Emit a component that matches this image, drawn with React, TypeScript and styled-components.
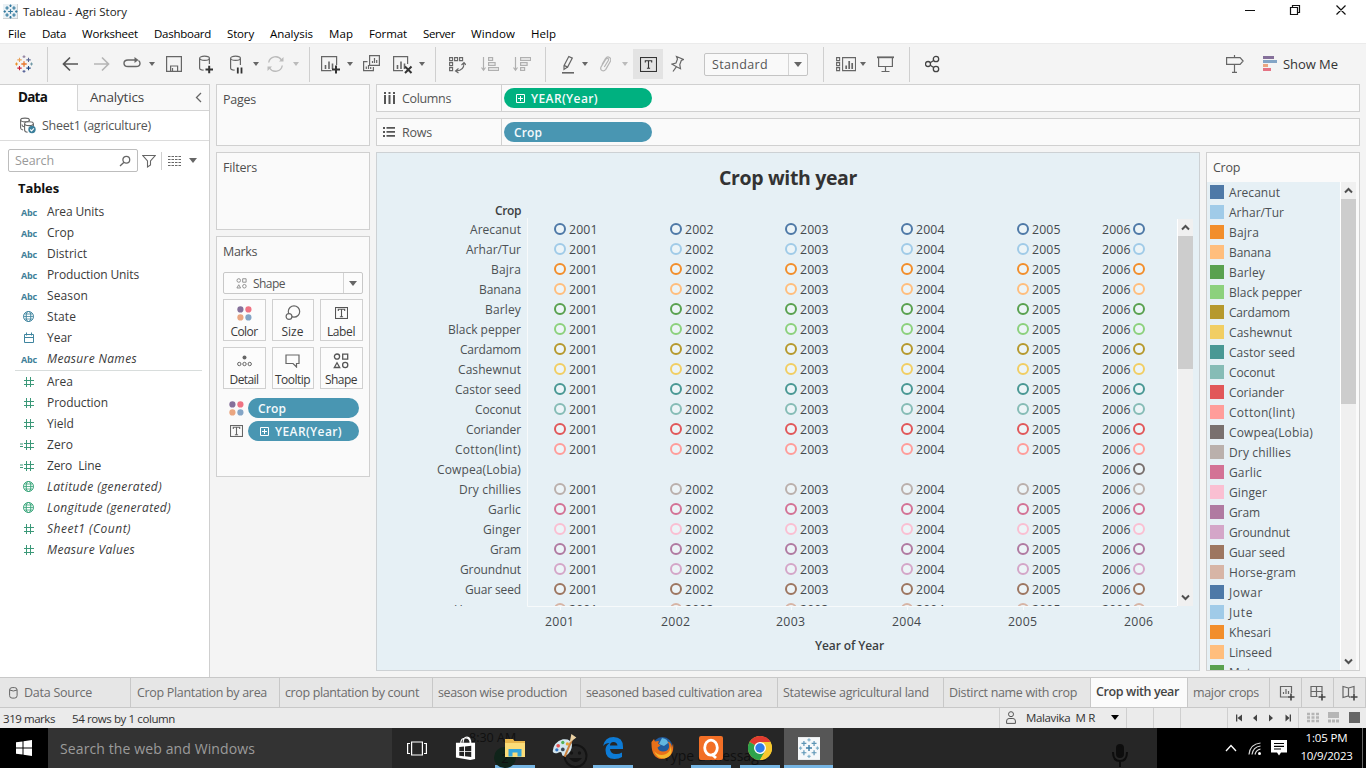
import React, { useLayoutEffect, useRef, ReactNode } from "react";
import styled, { createGlobalStyle } from "styled-components";

const Global = createGlobalStyle`
  *, *::before, *::after { box-sizing: border-box; }
  html, body { margin: 0; padding: 0; overflow: hidden; }
  body { font-family: "Open Sans", "Noto Sans", sans-serif; font-size: 12px; color: #4f4f4f; }
  svg { display: block; flex: none; }
`;

/* Text tracked so that it fills the given width. */
const FitSpan = styled.span`
  display: inline-block;
  white-space: pre;
  flex: none;
`;
function Fit({ w, children }: { w: number; children: string }) {
  const ref = useRef<HTMLSpanElement>(null);
  useLayoutEffect(() => {
    const el = ref.current;
    if (!el) return;
    el.style.letterSpacing = "0px";
    const natural = el.getBoundingClientRect().width;
    el.style.letterSpacing = `${((w - natural) / children.length).toFixed(3)}px`;
  }, [w, children]);
  return <FitSpan ref={ref}>{children}</FitSpan>;
}

const palette = [
  "#4e79a7", "#a0cbe8", "#f28e2b", "#ffbe7d", "#59a14f", "#8cd17d", "#b6992d", "#f1ce63", "#499894", "#86bcb6",
  "#e15759", "#ff9d9a", "#79706e", "#bab0ac", "#d37295", "#fabfd2", "#b07aa1", "#d4a6c8", "#9d7660", "#d7b5a6",
];
const crops: [string, number][] = [
  ["Arecanut", 51], ["Arhar/Tur", 55], ["Bajra", 30], ["Banana", 42], ["Barley", 36], ["Black pepper", 73],
  ["Cardamom", 61], ["Cashewnut", 63], ["Castor seed", 66], ["Coconut", 46], ["Coriander", 55], ["Cotton(lint)", 66],
  ["Cowpea(Lobia)", 84], ["Dry chillies", 62], ["Garlic", 33], ["Ginger", 38], ["Gram", 31], ["Groundnut", 61],
  ["Guar seed", 56], ["Horse-gram", 67], ["Jowar", 34], ["Jute", 24], ["Khesari", 42], ["Linseed", 43], ["Matar", 34],
];

/* ---------- Window ---------- */
const Window = styled.div`
  width: 1366px; height: 768px; display: flex; flex-direction: column; background: #f4f4f4; overflow: hidden;
`;
const TitleBar = styled.div`
  height: 23px; background: #fff; display: flex; align-items: center; padding-left: 3px; color: #222; font-size: 11.5px; flex: none;
`;
const TitleText = styled.div`margin-left: 5px; flex: 1;`;
const MenuBar = styled.div`
  height: 20px; background: #fff; display: flex; padding-left: 8px; align-items: center; color: #000; font-size: 11.5px; flex: none;
`;
const MenuItem = styled.div<{ $w: number }>`width: ${p => p.$w}px; flex: none; line-height: 20px; padding-top: 1px;`;

/* ---------- Toolbar ---------- */
const Toolbar = styled.div`
  height: 41px; border-top: 1px solid #ebebeb; background: #f4f4f4; display: flex; align-items: center; flex: none;
`;
const Slot = styled.div<{ $ml: number }>`margin-left: ${p => p.$ml}px; flex: none;`;
const Sep = styled.div<{ $ml: number }>`
  margin-left: ${p => p.$ml}px; margin-top: 1px; width: 1px; height: 35px; background: #cfcfcf; flex: none;
`;
const CaretShape = styled.i<{ $ml?: number; $c?: string; $s?: number }>`
  margin-left: ${p => p.$ml ?? 0}px; width: 0; height: 0; flex: none;
  border: ${p => p.$s ?? 3}px solid transparent; border-top: ${p => (p.$s ?? 3) + 1}px solid ${p => p.$c ?? "#666"}; border-bottom: 0;
`;
const ToggleOn = styled.div`
  margin-left: 5px; width: 30px; height: 30px; background: #e3e3e3; display: flex; align-items: center; justify-content: center; flex: none;
`;
const Select = styled.div`
  margin-left: 20px; width: 104px; height: 23px; border: 1px solid #c4c4c4; border-radius: 2px; background: #f9f9f9;
  display: flex; align-items: center; flex: none; font-size: 12.5px; color: #555; padding-left: 7px;
`;
const SelectArrow = styled.div<{ $w: number }>`
  margin-left: auto; width: ${p => p.$w}px; align-self: stretch; border-left: 1px solid #d4d4d4; display: flex; align-items: center; justify-content: center;
`;
const ShowMe = styled.div`margin-left: 5px; font-size: 13px; color: #333;`;

function Icon({ w, h = 24, c = "#666", sw = 1.2, children }: { w: number; h?: number; c?: string; sw?: number; children: ReactNode }) {
  return (
    <svg width={w} height={h} viewBox={`0 0 ${w} ${h}`} fill="none" stroke={c} strokeWidth={sw}>{children}</svg>
  );
}

const logoColors = ["#e8762b", "#c72037", "#5b6591", "#e8a15a", "#1f447e", "#eb9129", "#7199a6", "#8c7b9b", "#5b679b"];
const blueColors = ["#3d7ea6", "#5b94b5", "#5b94b5", "#5b94b5", "#5b94b5", "#7fb0c9", "#7fb0c9", "#7fb0c9", "#7fb0c9"];
function TableauMark({ size, colors }: { size: number; colors: string[] }) {
  const pts = [[12, 12, 3.6], [6, 17.5, 2.9], [18, 6.5, 2.9], [6, 6.5, 2.9], [18, 17.5, 2.9], [2, 12, 1.9], [22, 12, 1.9], [12, 2.2, 1.9], [12, 21.8, 1.9]];
  return (
    <svg width={size} height={size} viewBox="0 0 24 24">
      {pts.map(([x, y, r], i) => (
        <path key={i} d={`M${x - r} ${y}H${x + r}M${x} ${y - r}V${y + r}`} stroke={colors[i]} strokeWidth={i === 0 ? 1.7 : 1.4} />
      ))}
    </svg>
  );
}
const T = ({ w, h, c = "#333" }: { w: number; h: number; c?: string }) => (
  <svg width={w} height={h} viewBox={`0 0 ${w} ${h}`} fill="none" stroke={c}>
    <rect x=".5" y=".5" width={w - 1} height={h - 1} strokeWidth="1.1" />
    <path d={`M${w / 2 - 3.2} ${h / 2 - 2}V${h / 2 - 3.7}H${w / 2 + 3.2}V${h / 2 - 2}M${w / 2} ${h / 2 - 4}V${h / 2 + 3.6}M${w / 2 - 1.6} ${h / 2 + 3.7}H${w / 2 + 1.6}`} strokeWidth="1.1" />
  </svg>
);
const Plus = () => (
  <svg width="9" height="9" viewBox="0 0 9 9" fill="none" stroke="#fff"><path d="M.5.5h8v8h-8zM2 4.5h5M4.5 2v5" /></svg>
);
function ColorDots({ size = 15 }: { size?: number }) {
  return (
    <svg width={size} height={size} viewBox="0 0 15 15">
      <circle cx="3.4" cy="3.4" r="3.1" fill="#85709a" /><circle cx="11.4" cy="3.4" r="3.1" fill="#ef7383" />
      <circle cx="3.4" cy="11.4" r="3.1" fill="#eaa681" /><circle cx="11.4" cy="11.4" r="3.1" fill="#84a5c6" />
    </svg>
  );
}
function Shapes({ size, c }: { size: number; c: string }) {
  return (
    <svg width={size} height={size} viewBox="0 0 16 16" fill="none" stroke={c} strokeWidth="1.3">
      <circle cx="4" cy="3.6" r="2.6" /><path d="M9.7 1.1h5v5h-5zM4 9.8l2.7 4.7H1.3z" /><circle cx="12.2" cy="12" r="2.6" />
    </svg>
  );
}

function AppToolbar() {
  const bars = "M4.5 13v4M8 9.5V17M11.5 11.5V17";
  return (
    <Toolbar>
      <Slot $ml={15}><TableauMark size={18} colors={logoColors} /></Slot>
      <Sep $ml={14} />
      <Slot $ml={14}><Icon w={16} c="#555" sw={1.7}><path d="M1 12h15M8 5.5L1.5 12 8 18.5" /></Icon></Slot>
      <Slot $ml={16}><Icon w={16} c="#b5b5b5" sw={1.7}><path d="M0 12h15M8 5.5L14.5 12 8 18.5" /></Icon></Slot>
      <Slot $ml={13}><Icon w={18} sw={1.4}><path d="M12.5 8H5Q1 8 1 11.2T5 14.5H13Q17 14.5 17 11.2 17 9.5 15.5 8.5" /><path d="M11.5 5l4 3-4 3z" fill="#666" stroke="none" /></Icon></Slot>
      <CaretShape $ml={8} />
      <Slot $ml={11}><Icon w={16}><path d="M.6 4.6h14.800v14.8H.6zM4.600 19v-5h7v5M6.500 16v3" /></Icon></Slot>
      <Slot $ml={17}><Icon w={14}><path d="M.6 6.5V16q0 2 4 2.2M10.400 6.5V12" /><ellipse cx="5.5" cy="6.3" rx="4.9" ry="2.1" /><path d="M6.5 17.500h7.500M10.200 13.800v7.500" stroke="#333" strokeWidth="2" /></Icon></Slot>
      <Slot $ml={16}><Icon w={14}><path d="M1.600 6.5V16q0 2 4 2.2M11.400 6.5V13" /><ellipse cx="6.5" cy="6.3" rx="4.9" ry="2.1" /><path d="M8.800 15.500v6M12.500 15.500v6" stroke="#333" strokeWidth="1.8" /></Icon></Slot>
      <CaretShape $ml={10} />
      <Slot $ml={8}><Icon w={17} c="#bbb" sw={1.4}><path d="M1.700 10.500A7 7 0 0 1 14.500 8M15.300 13.500A7 7 0 0 1 2.500 16" /><path d="M16.500 5v4.500H12zM.5 19v-4.500H5z" fill="#bbb" stroke="none" /></Icon></Slot>
      <CaretShape $ml={9} $c="#bbb" />
      <Sep $ml={10} />
      <Slot $ml={11}><Icon w={20}><path d="M10.500 18.600H.6V4.600h15v8.500" /><path d={bars} strokeWidth="1.6" /><path d="M11 17.500h8M15 13.500v8" stroke="#333" strokeWidth="2" /></Icon></Slot>
      <CaretShape $ml={6} />
      <Slot $ml={10}><Icon w={17}><path d="M6.600 3.600h9.800v9.800H6.600zM4.500 9.600H.6v9h9.800V15M9.500 11V9M11.500 11V6M13.700 11V8M3.300 17v-2.500M5.500 17v-4M7.700 17v-2" /></Icon></Slot>
      <Slot $ml={13}><Icon w={20}><path d="M10 18.600H.6V4.600h14v7.500" /><path d={bars} strokeWidth="1.6" /><path d="M12 14.500l6.500 6.500M18.500 14.500L12 21" stroke="#333" strokeWidth="2" /></Icon></Slot>
      <CaretShape $ml={6} />
      <Sep $ml={10} />
      <Slot $ml={13}><Icon w={17} sw={1.1}><path d="M.6 5.600h3v3h-3zM5.600 5.600h3v3h-3zM10.600 5.600h3v3h-3zM.6 10.600h3v3h-3zM.6 15.600h3v3h-3zM15 11.500q0 7-7.500 7.500M12.500 13L15 10.500 17 13M9.500 16.500L6.500 19l3 2" /></Icon></Slot>
      <Slot $ml={15}><Icon w={18} c="#b0b0b0"><path d="M2.500 5v13M.5 15.500l2 2.800 2-2.800M7.600 5.600h4v2.800h-4zM7.600 10.600h6.500v2.800H7.600zM7.600 15.600h10v2.800h-10z" /></Icon></Slot>
      <Slot $ml={14}><Icon w={18} c="#b0b0b0"><path d="M2.500 5v13M.5 15.500l2 2.800 2-2.800M7.600 5.600h10v2.800h-10zM7.600 10.600h6.500v2.800H7.600zM7.600 15.600h4v2.800h-4z" /></Icon></Slot>
      <Sep $ml={14} />
      <Slot $ml={15}><Icon w={13}><path d="M7.800 4.500l3.500 1.600-4.700 9-3.500-1.700zM3 13.500v4l3.600-2.400" /><path d="M1 20.800h12" strokeWidth="1.6" /></Icon></Slot>
      <CaretShape $ml={8} />
      <Slot $ml={11}><Icon w={12} c="#b5b5b5"><path d="M3 12.500l3.500-6q1.800-2.500 4-1t.8 4l-4.500 7.800q-1.800 2.300-3.800 1.200T2 15l5-8q1-1 2-.5t.3 2L5.300 15" /></Icon></Slot>
      <CaretShape $ml={11} $c="#bbb" />
      <ToggleOn><T w={17} h={15} /></ToggleOn>
      <Slot $ml={8}><Icon w={13}><path d="M5.500 4.500l7 3-2.200 1-1.500 4 .7 4.300-3-1.500L1 12.200l4-1.200 1.500-4zM5.300 14.800L2 19.500" /></Icon></Slot>
      <Select><Fit w={56}>Standard</Fit><SelectArrow $w={19}><CaretShape $s={4} /></SelectArrow></Select>
      <Sep $ml={15} />
      <Slot $ml={12}><Icon w={20} sw={1.1}><path d="M.6 5.600h3v3h-3zM.6 10.600h3v3h-3zM.6 15.600h3v3h-3zM6.600 5.600h12.900v13H6.600z" /><path d="M10.200 13.500V17M13.200 9v8M16.200 11v6" strokeWidth="1.7" /></Icon></Slot>
      <CaretShape $ml={4} />
      <Slot $ml={11}><Icon w={17}><path d="M0 5.300h17" strokeWidth="1.8" /><path d="M1.600 6v8.500h13.800V6M8.500 14.500v5M4.500 19.500h8" /></Icon></Slot>
      <Sep $ml={15} />
      <Slot $ml={15}><Icon w={15} c="#444" sw={1.3}><circle cx="3" cy="12" r="2.5" /><circle cx="11" cy="7" r="2.7" /><circle cx="11" cy="17" r="2.7" /><path d="M5.200 10.700l3.500-2.200M5.200 13.300l3.500 2.200" /></Icon></Slot>
      <Slot $ml={286}><Icon w={18}><path d="M.6 5.600h13.500l3 3.400-3 3.400H.6zM8.500 3v2.500M8.500 12.500v8M6 20.400h5" /></Icon></Slot>
      <Slot $ml={19}><svg width="15" height="24"><path d="M0 4h11v3H0z" fill="#85709a" /><path d="M0 8h14v3H0z" fill="#84a5c6" /><path d="M0 12h5v3H0z" fill="#eaa681" /><path d="M0 16h8v3H0z" fill="#e57384" /></svg></Slot>
      <ShowMe><Fit w={55}>Show Me</Fit></ShowMe>
    </Toolbar>
  );
}

/* ---------- Data pane ---------- */
const Body = styled.div`height: 593px; display: flex; flex: none;`;
const DataPane = styled.div`
  width: 210px; background: #fff; border-right: 1px solid #cfcfcf; border-top: 1px solid #cfcfcf; flex: none;
`;
const PaneTabs = styled.div`height: 26px; display: flex; font-size: 13.5px;`;
const DataTab = styled.div`width: 77px; padding: 2px 0 0 18px; font-weight: 700; color: #111; line-height: 20px;`;
const AnalyticsTab = styled.div`
  flex: 1; border-left: 1px solid #d4d4d4; border-bottom: 1px solid #d4d4d4; background: #f9f9f9; display: flex; align-items: center;
  padding: 0 7px 1px 12px; justify-content: space-between; color: #444;
`;
const Source = styled.div`
  height: 30px; border-bottom: 1px solid #dcdcdc; display: flex; align-items: center; padding-left: 20px; gap: 6px; color: #555; font-size: 12.5px;
`;
const SearchRow = styled.div`height: 40px; padding: 8px 0 0 8px; display: flex;`;
const SearchBox = styled.div`
  width: 130px; height: 23px; border: 1px solid #bdbdbd; border-radius: 2px; display: flex; align-items: center; justify-content: space-between; padding: 0 6px 0 6px; color: #999; font-size: 12.5px;
`;
const SearchTools = styled.div`height: 23px; display: flex; align-items: center; margin-left: 4px;`;
const Divider = styled.div`width: 1px; height: 18px; background: #cfcfcf; margin: 0 6px 0 5px;`;
const TablesHead = styled.div`height: 20px; line-height: 15px; padding-left: 18px; font-weight: 700; font-size: 13px; color: #111;`;
const FieldRow = styled.div<{ $i?: boolean }>`
  height: 21px; display: flex; align-items: center; color: #3a3a3a; font-size: 12px; font-style: ${p => (p.$i ? "italic" : "normal")};
`;
const FieldIcon = styled.div`width: 47px; padding-left: 20px; display: flex; align-items: center; flex: none; font-style: normal;`;
const AbcTag = styled.span`font: 700 9px "Open Sans", sans-serif; color: #3f7f99; margin: 2px 0 0 1px;`;
const FieldRule = styled.div`height: 1px; background: #d8dddc; margin: 1px 7px 0 15px;`;

type Kind = "abc" | "globe" | "cal" | "num" | "calc" | "geo";
function KindIcon({ k }: { k: Kind }) {
  if (k === "abc") return <AbcTag><Fit w={16}>Abc</Fit></AbcTag>;
  if (k === "globe" || k === "geo")
    return (
      <svg width="17" height="13" viewBox="0 0 17 13" fill="none" stroke={k === "geo" ? "#37a57a" : "#3f859f"}>
        <circle cx="8.5" cy="6.5" r="5" /><ellipse cx="8.5" cy="6.5" rx="2.3" ry="5" /><path d="M3.500 6.500h10M4.300 4h8.400M4.300 9h8.400" strokeWidth=".8" />
      </svg>
    );
  if (k === "cal")
    return <svg width="17" height="12" viewBox="0 0 17 12" fill="none" stroke="#3f859f"><path d="M4.500 2.500h9v8h-9zM4.500 5.500h9M6.500 .5v3M11.500 .5v3" /></svg>;
  return (
    <svg width="17" height="12" viewBox="0 0 17 12" fill="none" stroke="#3b9878">
      <path d="M6.500 1v10M10.500 1v10M4 4.500h10M4 8.500h10" />{k === "calc" && <path d="M0 5h3M0 7.500h3" />}
    </svg>
  );
}
const dims: [Kind, string, number, boolean?][] = [
  ["abc", "Area Units", 57], ["abc", "Crop", 27], ["abc", "District", 40], ["abc", "Production Units", 92], ["abc", "Season", 41],
  ["globe", "State", 29], ["cal", "Year", 25], ["abc", "Measure Names", 90, true],
];
const measures: [Kind, string, number, boolean?][] = [
  ["num", "Area", 26], ["num", "Production", 61], ["num", "Yield", 27], ["calc", "Zero", 26], ["calc", "Zero  Line", 54],
  ["geo", "Latitude (generated)", 115, true], ["geo", "Longitude (generated)", 124, true], ["num", "Sheet1 (Count)", 84, true], ["num", "Measure Values", 88, true],
];
const Field = ({ f }: { f: [Kind, string, number, boolean?] }) => (
  <FieldRow $i={f[3]}><FieldIcon><KindIcon k={f[0]} /></FieldIcon><Fit w={f[2]}>{f[1]}</Fit></FieldRow>
);

/* ---------- Cards ---------- */
const CardsColumn = styled.div`width: 154px; margin-left: 6px; display: flex; flex-direction: column; gap: 6px; flex: none;`;
const Card = styled.div<{ $h: number }>`
  height: ${p => p.$h}px; border: 1px solid #d0d0d0; background: #fafafa; padding: 6px 6px 0; flex: none;
`;
const CardTitle = styled.div`font-size: 12.5px; line-height: 18px; color: #4f4f4f;`;
const MarkSelect = styled.div`
  height: 22px; margin-top: 11px; border: 1px solid #c8c8c8; border-radius: 2px; background: #fcfcfc; display: flex; align-items: center; padding-left: 12px; gap: 6px; color: #555;
`;
const MarkGrid = styled.div`display: grid; grid-template-columns: 43px 42px 43px; gap: 6px; justify-content: space-between; margin-top: 5px;`;
const MarkButton = styled.div`
  height: 42px; border: 1px solid #d0d0d0; background: #fcfcfc; display: flex; flex-direction: column; align-items: center; color: #3a3a3a; line-height: 17px; padding-right: 1px;
`;
const MarkIcon = styled.div`height: 24px; padding-top: 3px; display: flex; align-items: center; justify-content: center;`;
const PillRow = styled.div<{ $mt: number }>`margin-top: ${p => p.$mt}px; display: flex; align-items: center; padding-left: 6px;`;
const PillIcon = styled.div<{ $pl?: number }>`width: 19px; padding-left: ${p => p.$pl ?? 0}px; flex: none;`;
const Pill = styled.div<{ $w: number; $c: string }>`
  width: ${p => p.$w}px; height: 20px; border-radius: 10px; background: ${p => p.$c}; color: #f4fafc; display: flex; align-items: center; padding: 0 10px; gap: 6px;
  font-weight: 600; font-size: 12px; flex: none;
  svg { margin-left: 2px; }
`;

/* ---------- Worksheet ---------- */
const Main = styled.div`width: 984px; margin-left: 6px; display: flex; flex-direction: column; gap: 6px; flex: none;`;
const Shelf = styled.div`height: 28px; border: 1px solid #d0d0d0; background: #fafafa; display: flex; align-items: center; flex: none;`;
const ShelfName = styled.div`
  width: 125px; height: 26px; border-right: 1px solid #d0d0d0; display: flex; align-items: center; padding-left: 6px; gap: 6px; font-size: 12.5px; margin-right: 2px; color: #555;
`;
const Sheet = styled.div`display: flex; gap: 6px; height: 519px;`;
const Viz = styled.div`width: 824px; border: 1px solid #cdd1d4; background: #e6f0f5; flex: none;`;
const VizTitle = styled.div`height: 50px; line-height: 49px; text-align: center; font-size: 19.5px; font-weight: 700; color: #333;`;
const VizBody = styled.div`display: flex; height: 430px;`;
const RowLabels = styled.div`width: 150px; height: 403px; overflow: hidden; padding-right: 6px; text-align: right; color: #4c5054;`;
const RowHead = styled.div`height: 17px; line-height: 16px; font-weight: 600; color: #3c3f42;`;
const RowLabel = styled.div`height: 20px; line-height: 20px;`;
const PlotWrap = styled.div`width: 650px; padding-top: 15px;`;
const AxisTitle = styled.div`width: 645px; margin-top: 8px; text-align: center; font-weight: 600; color: #3c3f42; line-height: 16px;`;
const Scroll = styled.div<{ $h: number; $mt?: number }>`
  width: 16px; height: ${p => p.$h}px; margin-top: ${p => p.$mt ?? 0}px; background: #f0f0f0; border-left: 1px solid #fff; display: flex; flex-direction: column; justify-content: space-between; flex: none;
`;
const Arrow = styled.div`height: 17px; display: flex; align-items: center; justify-content: center;`;
const Thumb = styled.div<{ $h: number }>`height: ${p => p.$h}px; background: #cdcdcd; margin-bottom: auto;`;
const Chev = ({ up }: { up?: boolean }) => (
  <svg width="9" height="7" viewBox="0 0 9 7" fill="none" stroke="#505050" strokeWidth="2"><path d={up ? "M1 5.500l3.500-3.500L8 5.500" : "M1 1.500L4.500 5 8 1.500"} /></svg>
);
const Legend = styled.div`width: 154px; border: 1px solid #d0d0d0; background: #fafafa;`;
const LegendTitle = styled.div`height: 29px; padding: 6px 0 0 6px; line-height: 18px; font-size: 12.5px;`;
const LegendBody = styled.div`height: 488px; display: flex; overflow: hidden;`;
const LegendList = styled.div`width: 133px; background: #e6f0f5; overflow: hidden;`;
const LegendItem = styled.div`height: 20px; display: flex; align-items: center; padding-left: 3px; gap: 5px; color: #4c5054;`;
const Swatch = styled.div<{ $c: string }>`width: 14px; height: 14px; background: ${p => p.$c};`;

const columnX = [33, 149, 264, 380, 496, 612];
function Plot() {
  return (
    <svg width="650" height="412" fontFamily="Open Sans" fontSize="12.3" fill="#45494d">
      <defs><clipPath id="plot"><rect x="0" y="0" width="650" height="388" /></clipPath></defs>
      <path d="M.5 0V388.5H650" fill="none" stroke="#f7fafb" />
      {columnX.map(x => <path key={x} d={`M${x}.5 388v4`} stroke="#f7fafb" />)}
      <g clipPath="url(#plot)">
        {crops.slice(0, 20).map(([name], r) =>
          columnX.map((x, c) => {
            if (name === "Cowpea(Lobia)" && c < 5) return null;
            const y = 11 + r * 20;
            return (
              <g key={`${r}-${c}`}>
                <circle cx={x} cy={y} r="5" fill="#ffffff40" stroke={palette[r]} strokeWidth="2" />
                <text x={c === 5 ? x - 37 : x + 9} y={y + 5} textLength="28.5">{2001 + c}</text>
              </g>
            );
          })
        )}
      </g>
      {columnX.map((x, c) => <text key={c} x={x - 15} y="408" textLength="29">{2001 + c}</text>)}
    </svg>
  );
}

/* ---------- Bottom bars ---------- */
const Tabs = styled.div`height: 31px; border-top: 1px solid #c8c8c8; border-bottom: 1px solid #c8c8c8; background: #e6e6e6; display: flex; flex: none;`;
const Tab = styled.div<{ $w: number; $on?: boolean; $pl?: number }>`
  width: ${p => p.$w}px; border-right: 1px solid #c8c8c8; display: flex; align-items: center; padding-left: ${p => p.$pl ?? 5}px; gap: 5px; font-size: 12.5px; flex: none;
  color: ${p => (p.$on ? "#444" : "#6c6c6c")}; background: ${p => (p.$on ? "#fbfbfb" : "#e6e6e6")}; font-weight: ${p => (p.$on ? 600 : 400)};
  padding-bottom: ${p => (p.$on ? 3 : 0)}px;
`;
const Status = styled.div`height: 20px; background: #ebebeb; display: flex; align-items: center; font-size: 11.5px; color: #333; flex: none; padding-left: 3px;`;
const StatusCell = styled.div<{ $w: number }>`
  width: ${p => p.$w}px; height: 20px; border-left: 1px solid #cfcfcf; display: flex; align-items: center; justify-content: center; flex: none;
`;
const UserCell = styled(StatusCell)`justify-content: flex-start; padding: 0 0 2px 6px; gap: 10px;`;
const NavCell = styled(StatusCell)`padding-right: 2px; padding-bottom: 1px;`;
const ViewCell = styled(StatusCell)`padding-left: 4px; padding-bottom: 1px;`;
const Taskbar = styled.div`height: 40px; background: #000; display: flex; flex: none; color: #fff;`;
const Start = styled.div`width: 48px; display: flex; align-items: center; justify-content: center;`;
const TaskSearch = styled.div`width: 344px; background: #333; color: #9b9b9b; font-size: 14px; display: flex; align-items: center; padding: 0 0 0 12px;`;
const Apps = styled.div`width: 765px; background: #262626; display: flex; position: relative;`;
const TaskApp = styled.div<{ $on?: boolean; $line?: boolean }>`
  width: 49px; height: 40px; display: flex; align-items: center; justify-content: center; flex: none;
  svg { position: relative; }
  ${p => p.$on && "background: #565656;"}
  ${p => (p.$line || p.$on) && "box-shadow: inset 0 -3px 0 #76b5e3;"}
  ${p => p.$line && "width: 40px; margin: 0 4px 0 5px;"}
`;
const Ghost = styled.div<{ $x: number; $y: number; $s: number }>`
  position: absolute; left: ${p => p.$x}px; top: ${p => p.$y}px; font-size: ${p => p.$s}px; line-height: 18px; color: #101010; white-space: pre;
`;
const GhostBadge = styled(Ghost)`width: 22px; height: 21px; border-radius: 11px; background: #10241a; text-align: center; line-height: 22px;`;
const Tray = styled.div`flex: 1; display: flex; align-items: center; padding-left: 68px;`;
const Clock = styled.div`
  width: 72px; padding-left: 0; text-align: center; font-size: 11.5px; line-height: 18px; border-right: 1px solid #666; height: 40px; padding-top: 1px;
`;

const menus: [string, number, number][] = [
  ["File", 34, 18], ["Data", 40, 24], ["Worksheet", 72, 56], ["Dashboard", 73, 57], ["Story", 43, 27], ["Analysis", 59, 43],
  ["Map", 40, 24], ["Format", 54, 38], ["Server", 48, 32], ["Window", 60, 44], ["Help", 40, 25],
];
const sheets: [string, number, number, number][] = [
  ["Crop Plantation by area", 149, 130, 6], ["crop plantation by count", 153, 134, 5], ["season wise production", 148, 129, 5],
  ["seasoned based cultivation area", 197, 176, 5], ["Statewise agricultural land", 166, 146, 5], ["Distirct name with crop", 147, 128, 5],
  ["Crop with year", 97, 83, 5], ["major crops", 82, 66, 5],
];

export default function App() {
  return (
    <Window>
      <Global />
      <TitleBar>
        <svg width="15" height="15" viewBox="-1 -1 26 26"><rect x="-1" y="-1" width="26" height="26" fill="#eaf1f5" /><path d="M24.500-1v25.500H-1" stroke="#aaa" fill="none" />
          {[[12, 12, 4], [6, 18, 3], [18, 6, 3], [6, 6, 3], [18, 18, 3], [2, 12, 2], [22, 12, 2], [12, 2, 2], [12, 22, 2]].map(([x, y, r], i) => <path key={i} d={`M${x - r} ${y}h${2 * r}M${x} ${y - r}v${2 * r}`} stroke="#31789d" strokeWidth="2" />)}
        </svg>
        <TitleText><Fit w={104}>Tableau - Agri Story</Fit></TitleText>
        <svg width="121" height="23" viewBox="0 0 121 23" fill="none" stroke="#111" strokeWidth="1.2">
          <path d="M0 10.500h10M45.500 7.500h7v7h-7zM47.500 7.500v-2h7v7h-2M91.500 5.500l9 9M100.500 5.500l-9 9" />
        </svg>
      </TitleBar>
      <MenuBar>{menus.map(([m, w, t]) => <MenuItem key={m} $w={w}><Fit w={t}>{m}</Fit></MenuItem>)}</MenuBar>
      <AppToolbar />
      <Body>
        <DataPane>
          <PaneTabs>
            <DataTab><Fit w={29}>Data</Fit></DataTab>
            <AnalyticsTab><Fit w={54}>Analytics</Fit><svg width="7" height="11" fill="none" stroke="#666" strokeWidth="1.3"><path d="M6 1L1.500 5.500 6 10" /></svg></AnalyticsTab>
          </PaneTabs>
          <Source>
            <svg width="16" height="17" viewBox="0 0 16 17" fill="none" stroke="#666" strokeWidth="1.1">
              <ellipse cx="5" cy="3" rx="4.4" ry="1.9" /><path d="M.6 3v8q0 1.500 2.500 2M9.400 3v1" />
              <ellipse cx="9" cy="6.7" rx="4.4" ry="1.9" fill="#fff" /><path d="M4.600 7v6q0 2 3 2.300M13.400 7v2M2 7.500q0 2 2 2.300" />
              <circle cx="12" cy="12.5" r="3.7" fill="#3b7f9b" stroke="none" /><path d="M10.200 12.500l1.400 1.400 2.300-2.600" stroke="#fff" />
            </svg>
            <Fit w={109}>Sheet1 (agriculture)</Fit>
          </Source>
          <SearchRow>
            <SearchBox><Fit w={39}>Search</Fit><svg width="12" height="12" fill="none" stroke="#666" strokeWidth="1.3"><circle cx="7.3" cy="4.7" r="3.4" /><path d="M5 7.200L1 11" /></svg></SearchBox>
            <SearchTools>
              <svg width="14" height="14" fill="none" stroke="#666" strokeWidth="1.1"><path d="M.8 1.500h12.400L8.500 7v4l-3 2V7z" /></svg>
              <Divider />
              <svg width="13" height="12" stroke="#666" strokeWidth="1.2"><path d="M0 1.500h13M0 4.500h13M0 7.500h13M0 10.500h13" strokeDasharray="2.5 1" /></svg>
              <CaretShape $ml={8} $s={4} />
            </SearchTools>
          </SearchRow>
          <TablesHead><Fit w={41}>Tables</Fit></TablesHead>
          {dims.map(f => <Field key={f[1]} f={f} />)}
          <FieldRule />
          {measures.map(f => <Field key={f[1]} f={f} />)}
        </DataPane>

        <CardsColumn>
          <Card $h={62}><CardTitle><Fit w={33}>Pages</Fit></CardTitle></Card>
          <Card $h={78}><CardTitle><Fit w={34}>Filters</Fit></CardTitle></Card>
          <Card $h={241}>
            <CardTitle><Fit w={34}>Marks</Fit></CardTitle>
            <MarkSelect><Shapes size={11} c="#888" /><Fit w={32}>Shape</Fit><SelectArrow $w={19}><CaretShape $s={4} /></SelectArrow></MarkSelect>
            <MarkGrid>
              <MarkButton><MarkIcon><ColorDots /></MarkIcon><Fit w={27}>Color</Fit></MarkButton>
              <MarkButton><MarkIcon><svg width="16" height="16" fill="none" stroke="#666" strokeWidth="1.2"><circle cx="9" cy="6.5" r="5.7" /><circle cx="4" cy="11.5" r="2.9" fill="#fcfcfc" /></svg></MarkIcon><Fit w={22}>Size</Fit></MarkButton>
              <MarkButton><MarkIcon><T w={13} h={12} c="#555" /></MarkIcon><Fit w={28}>Label</Fit></MarkButton>
              <MarkButton><MarkIcon><svg width="15" height="12" fill="none" stroke="#666"><circle cx="7.5" cy="2.5" r="2" fill="#666" stroke="none" /><circle cx="2.3" cy="9" r="1.7" /><circle cx="7.5" cy="9" r="1.7" /><circle cx="12.7" cy="9" r="1.7" /></svg></MarkIcon><Fit w={29}>Detail</Fit></MarkButton>
              <MarkButton><MarkIcon><svg width="15" height="14" fill="none" stroke="#666" strokeWidth="1.2"><path d="M1 1h13v8.500h-2.500V13L8 9.500H1z" /></svg></MarkIcon><Fit w={35}>Tooltip</Fit></MarkButton>
              <MarkButton><MarkIcon><Shapes size={16} c="#555" /></MarkIcon><Fit w={32}>Shape</Fit></MarkButton>
            </MarkGrid>
            <PillRow $mt={9}><PillIcon><ColorDots /></PillIcon><Pill $w={111} $c="#4996b2"><Fit w={28}>Crop</Fit></Pill></PillRow>
            <PillRow $mt={3}><PillIcon $pl={1}><T w={13} h={12} c="#666" /></PillIcon><Pill $w={111} $c="#4996b2"><Plus /><Fit w={67}>YEAR(Year)</Fit></Pill></PillRow>
          </Card>
        </CardsColumn>

        <Main>
          <Shelf>
            <ShelfName>
              <svg width="13" height="12" fill="#555"><path d="M1 0h2v2H1zM5.500 0h2v2h-2zM10 0h2v2h-2zM1 3h2v9H1zM5.500 3h2v9h-2zM10 3h2v9h-2z" /></svg>
              <Fit w={49}>Columns</Fit>
            </ShelfName>
            <Pill $w={148} $c="#00b180"><Plus /><Fit w={67}>YEAR(Year)</Fit></Pill>
          </Shelf>
          <Shelf>
            <ShelfName>
              <svg width="13" height="12" fill="#555"><path d="M0 1h2v2H0zM0 5h2v2H0zM0 9h2v2H0zM3.500 1H12v1.700H3.500zM3.500 5H12v1.700H3.500zM3.500 9H12v1.700H3.500z" /></svg>
              <Fit w={30}>Rows</Fit>
            </ShelfName>
            <Pill $w={148} $c="#4996b2"><Fit w={28}>Crop</Fit></Pill>
          </Shelf>
          <Sheet>
            <Viz>
              <VizTitle><Fit w={138}>Crop with year</Fit></VizTitle>
              <VizBody>
                <RowLabels>
                  <RowHead><Fit w={26}>Crop</Fit></RowHead>
                  {crops.slice(0, 20).map(([c, w]) => <RowLabel key={c}><Fit w={w}>{c}</Fit></RowLabel>)}
                </RowLabels>
                <PlotWrap><Plot /><AxisTitle><Fit w={69}>Year of Year</Fit></AxisTitle></PlotWrap>
                <Scroll $h={387} $mt={16}><Arrow><Chev up /></Arrow><Thumb $h={133} /><Arrow><Chev /></Arrow></Scroll>
              </VizBody>
            </Viz>
            <Legend>
              <LegendTitle><Fit w={27}>Crop</Fit></LegendTitle>
              <LegendBody>
                <LegendList>
                  {crops.map(([c, w], i) => <LegendItem key={c}><Swatch $c={palette[i % 20]} /><Fit w={w}>{c}</Fit></LegendItem>)}
                </LegendList>
                <Scroll $h={488}><Arrow><Chev up /></Arrow><Thumb $h={205} /><Arrow><Chev /></Arrow></Scroll>
              </LegendBody>
            </Legend>
          </Sheet>
        </Main>
      </Body>

      <Tabs>
        <Tab $w={131} $pl={9}>
          <svg width="10" height="12" fill="none" stroke="#666"><rect x=".6" y=".6" width="7.5" height="10.5" rx="2.5" /><path d="M.6 3q3.700 2 7.500 0" /></svg>
          <Fit w={68}>Data Source</Fit>
        </Tab>
        {sheets.map(([s, w, t, pl]) => <Tab key={s} $w={w} $pl={pl} $on={s === "Crop with year"}><Fit w={t}>{s}</Fit></Tab>)}
        <Tab $w={32} $pl={9}><Icon w={16} h={16}><path d="M8 12H1.500V1.500h11V8M4.500 9V7M7 9V4M9.500 9V6" /><path d="M8.500 12h7M12 8.500v7" stroke="#444" strokeWidth="1.6" /></Icon></Tab>
        <Tab $w={32} $pl={8}><Icon w={16} h={16}><path d="M7.500 11.500H1V1.500h11V8M1 6.500h11M6.500 1.500v10" /><path d="M8.500 12h7M12 8.500v7" stroke="#444" strokeWidth="1.6" /></Icon></Tab>
        <Tab $w={32} $pl={8}><Icon w={16} h={16}><path d="M8 12.500L6.500 11 1 12.500V1.500L6.500 3 12 1.500V8M6.500 3v8" /><path d="M8.500 12h7M12 8.500v7" stroke="#444" strokeWidth="1.6" /></Icon></Tab>
      </Tabs>
      <Status>
        <Slot $ml={0}><Fit w={52}>319 marks</Fit></Slot>
        <Slot $ml={17}><Fit w={103}>54 rows by 1 column</Fit></Slot>
        <Slot $ml={824} />
        <UserCell $w={127}>
          <svg width="10" height="13" fill="none" stroke="#555"><circle cx="5" cy="3.2" r="2.5" /><path d="M.6 12.400V10q0-2.500 2.500-2.500h3.800q2.500 0 2.500 2.500v2.400z" /></svg>
          <Fit w={69}>Malavika  M R</Fit><CaretShape $ml={6} $s={4} $c="#000" />
        </UserCell>
        <StatusCell $w={27} /><StatusCell $w={27} /><StatusCell $w={47} />
        <NavCell $w={71}>
          <svg width="60" height="8" fill="#444"><path d="M4 .5h1.300v7H4zM10 .5v7L5.500 4zM25 .5v7L21 4zM37 .5v7L41 4zM53.500 .5v7L57.500 4zM57.700 .5H59v7h-1.300z" /></svg>
        </NavCell>
        <ViewCell $w={68}>
          <svg width="54" height="11"><path d="M0 2h12M0 5.500h12M0 9h12" stroke="#b5b5b5" strokeWidth="2.6" strokeDasharray="3 1.5" /><path d="M21 0h11v6H21zM21 7.500h3v3h-3zM25 7.500h3v3h-3zM29 7.500h3v3h-3z" fill="#b5b5b5" /><path d="M42 0h11v11H42z" fill="#666" /></svg>
        </ViewCell>
      </Status>

      <Taskbar>
        <Start><svg width="16" height="16" fill="#fff"><path d="M0 2.300L6.500 1.400V7.500H0zM7.500 1.200L16 0v7.500H7.500zM0 8.500h6.500v6.100L0 13.700zM7.500 8.500H16V16l-8.500-1.200z" /></svg></Start>
        <TaskSearch><Fit w={195}>Search the web and Windows</Fit></TaskSearch>
        <Apps>
          <Ghost $x={77} $y={1} $s={12.5}>8:30 AM</Ghost>
          <GhostBadge $x={102} $y={19} $s={13}>2</GhostBadge>
          <Ghost $x={271} $y={19} $s={14}>Type a message</Ghost>
          <TaskApp><svg width="20" height="15" fill="none" stroke="#fff" strokeWidth="1.2"><path d="M4.600 1h10.800v13H4.600zM3 2.500H.6v10H3M17 2.500h2.400v10H17" /></svg></TaskApp>
          <TaskApp>
            <svg width="21" height="25" viewBox="0 0 22 26"><path d="M6 8q0-6 5-6t5 6M8.500 7q0-6 4-6 4 0 4 7" fill="none" stroke="#fff" strokeWidth="1.3" /><path d="M1 7h20v17l-5 1-15-2.500z" fill="#fff" /><path d="M4.500 11.500l5-.6v4.600h-5zM10.500 10.800l6.500-.8v5.500h-6.500zM4.500 16.500h5v4.600l-5-.6zM10.500 16.500H17V22l-6.500-.8z" fill="#222" /></svg>
          </TaskApp>
          <TaskApp $line>
            <svg width="22" height="20" viewBox="0 0 22 20"><path d="M1 1h8l1.500 2H21v16H1z" fill="#e8b64c" /><path d="M1 5h20v14H1z" fill="#fbdc78" /><path d="M4.500 18.500V11h13v7.500h-4v-4h-5v4z" fill="#33a5dc" /></svg>
          </TaskApp>
          <TaskApp>
            <svg width="48" height="40" viewBox="0 0 48 40">
              <circle cx="35.5" cy="28" r="11" fill="none" stroke="#141414" strokeWidth="2" /><circle cx="31.5" cy="25" r="1.7" fill="#141414" /><circle cx="39.5" cy="25" r="1.7" fill="#141414" /><path d="M29 30q6.500 8 13 0z" fill="#141414" />
              <g transform="translate(9 3) scale(.92)"><path d="M4 22Q5 12 15 9q9-1 10 6 0 8-7 12-4 1-4-2 0-3-3-2-6 3-7-1z" fill="#d3e6ef" /><circle cx="10" cy="16" r="2" fill="#e55353" /><circle cx="15" cy="12.5" r="1.8" fill="#53b356" /><circle cx="20" cy="14" r="1.8" fill="#e9a52f" /><circle cx="8.5" cy="20.5" r="1.8" fill="#3676c5" /><circle cx="15" cy="20" r="2" fill="#3a4654" /><path d="M25 9L17 28" stroke="#cc8341" strokeWidth="2.2" /><path d="M24 10l1-5 3 2z" fill="#ead1a3" stroke="#ead1a3" strokeWidth="2" /></g>
            </svg>
          </TaskApp>
          <TaskApp $line><svg width="22" height="24" viewBox="0 0 22 24"><path d="M1 10Q3 1 11.500 1 21 1 21 11v2H8q.5 5 6 5 3.500 0 6-1.500V21q-3 2-7.500 2-9 0-9-9 0-4.500 4-7Q3.500 7 1 10zM8 9.500h7.500Q15 6 11.500 6T8 9.500z" fill="#0d7bd6" fillRule="evenodd" /></svg></TaskApp>
          <TaskApp>
            <svg width="24" height="24" viewBox="0 0 24 24"><circle cx="12.5" cy="11" r="10" fill="#215b9e" /><path d="M12 2q6 1 6 5l-4 3-5-2z" fill="#62b6df" /><path d="M1.500 6L4 3l1 2.500 4-.5-1 2.500 2.500 2-3 2q1 4 5.500 4 5 0 6-4 .5-4-1.500-6 4 1 4.500 6l1-4q2 14-11.500 15.500Q1 22 1.500 6z" fill="#e8701a" /><path d="M4 15q5 6 12 3 5-3 4.500-8 3.500 10-6 12.500Q7 23 4 15z" fill="#f5b52c" /></svg>
          </TaskApp>
          <TaskApp $line><svg width="24" height="24" viewBox="0 0 24 24"><rect width="24" height="24" rx="2" fill="#f26f26" /><ellipse cx="12" cy="11.7" rx="6.3" ry="7.5" fill="none" stroke="#fff" strokeWidth="2.8" /><path d="M12.500 18l4.500 4" stroke="#fff" strokeWidth="2.8" /></svg></TaskApp>
          <TaskApp $line>
            <svg width="24" height="24" viewBox="0 0 24 24"><circle cx="12" cy="12" r="12" fill="#f7c82e" /><path d="M12 12L1.600 6A12 12 0 0 1 22.400 6H12z" fill="#e23b30" /><path d="M12 12L1.600 6A12 12 0 0 0 12 24l5.200-9z" fill="#2ea34c" /><path d="M12 6h10.400A12 12 0 0 1 12 24l5.200-9z" fill="#f7c82e" /><circle cx="12" cy="12" r="6" fill="#fff" /><circle cx="12" cy="12" r="4.7" fill="#2e7bea" /></svg>
          </TaskApp>
          <TaskApp $on><svg width="22" height="23" viewBox="-1 -1 26 27"><rect x="-1" y="-1" width="26" height="27" fill="#f5f8fa" /><TableauMark size={24} colors={blueColors} /></svg></TaskApp>
          <Slot $ml={278}><svg width="18" height="40" viewBox="0 0 18 40" fill="none" stroke="#0d0d0d" strokeWidth="2"><rect x="6" y="17" width="6" height="12" rx="3" fill="#0d0d0d" /><path d="M2 24q0 9 7 9t7-9M9 33v6" /></svg></Slot>
        </Apps>
        <Tray>
          <svg width="12" height="8" fill="none" stroke="#fff" strokeWidth="1.3"><path d="M1 7l5-5.500L11 7" /></svg>
          <svg width="34" height="18" viewBox="1 0 34 18" fill="none" stroke="#ddd" strokeWidth="1.2">
            <path d="M13 15.500Q14 5 24.500 4M16 15.500Q17 8 24.500 7M19 15.500Q20 11 24.500 10" /><circle cx="23.5" cy="14.5" r="1.5" fill="#fff" stroke="none" />
          </svg>
          <svg width="16" height="18" viewBox="0 0 16 18"><path d="M0 1h16v12.500H10L8 16.500 6 13.500H0z" fill="#fff" /><path d="M3 4.500h10M3 7.300h10M3 10h7" stroke="#000" strokeWidth="1.2" /></svg>
          <Slot $ml={4} />
          <Clock><Fit w={42}>1:05 PM</Fit><br /><Fit w={52}>10/9/2023</Fit></Clock>
        </Tray>
      </Taskbar>
    </Window>
  );
}
